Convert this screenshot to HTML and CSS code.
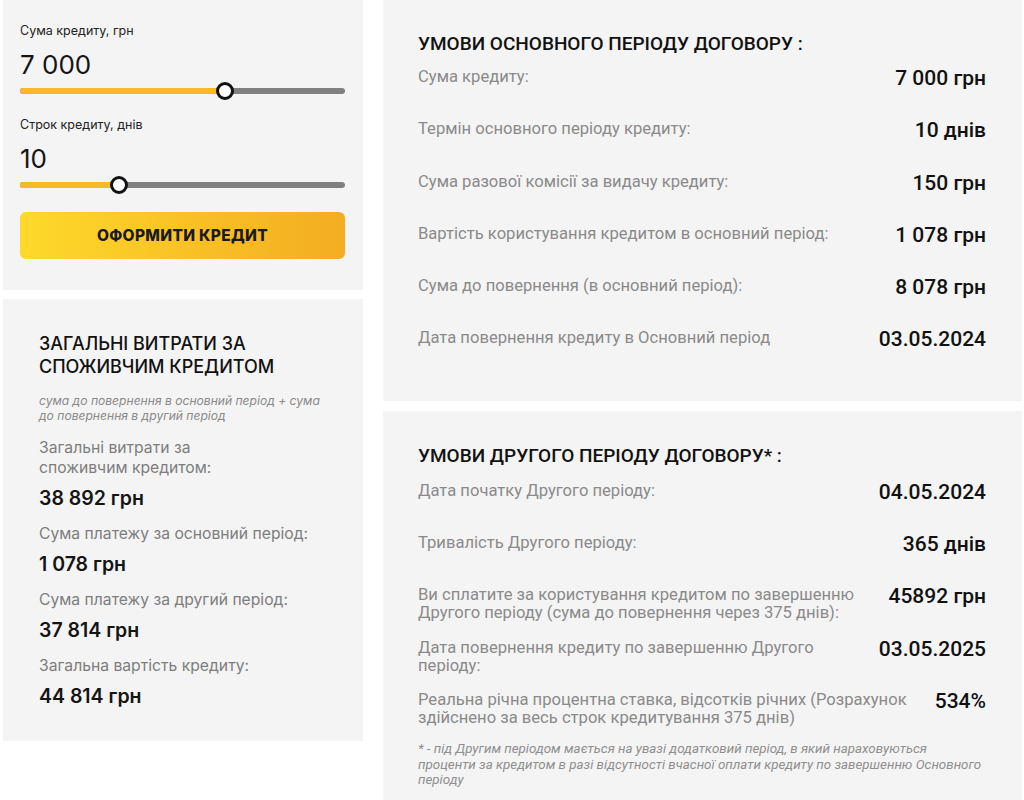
FILE: index.html
```html
<!DOCTYPE html>
<html lang="uk">
<head>
    <meta charset="UTF-8">
    <meta name="viewport" content="width=device-width, initial-scale=1.0">
    <title>Калькулятор кредиту</title>
    <link rel="stylesheet" href="styles.css">
</head>
<body>
    <div class="calc">
        <div class="calc-left">
            <div class="card card-form">
                <div class="field-label">Сума кредиту, грн</div>
                <div class="field-value">7 000</div>
                <div class="range">
                    <div class="range-fill" style="width: 63%"></div>
                    <div class="range-knob" style="left: 63%"></div>
                </div>

                <div class="field-label field-label-next">Строк кредиту, днів</div>
                <div class="field-value">10</div>
                <div class="range">
                    <div class="range-fill" style="width: 30.5%"></div>
                    <div class="range-knob" style="left: 30.5%"></div>
                </div>

                <button class="btn-apply">ОФОРМИТИ КРЕДИТ</button>
            </div>

            <div class="card card-total">
                <h2 class="total-title">ЗАГАЛЬНІ ВИТРАТИ ЗА СПОЖИВЧИМ КРЕДИТОМ</h2>
                <p class="total-note">сума до повернення в основний період + сума до повернення в другий період</p>
                <div class="total-label">Загальні витрати за<br>споживчим кредитом:</div>
                <div class="total-value">38 892 грн</div>
                <div class="total-label">Сума платежу за основний період:</div>
                <div class="total-value">1 078 грн</div>
                <div class="total-label">Сума платежу за другий період:</div>
                <div class="total-value">37 814 грн</div>
                <div class="total-label">Загальна вартість кредиту:</div>
                <div class="total-value">44 814 грн</div>
            </div>
        </div>

        <div class="calc-right">
            <div class="card card-terms card-terms-first">
                <h2 class="terms-title">УМОВИ ОСНОВНОГО ПЕРІОДУ ДОГОВОРУ :</h2>
                <div class="terms-row">
                    <span class="terms-label">Сума кредиту:</span>
                    <span class="terms-value">7 000 грн</span>
                </div>
                <div class="terms-row">
                    <span class="terms-label">Термін основного періоду кредиту:</span>
                    <span class="terms-value">10 днів</span>
                </div>
                <div class="terms-row">
                    <span class="terms-label">Сума разової комісії за видачу кредиту:</span>
                    <span class="terms-value">150 грн</span>
                </div>
                <div class="terms-row">
                    <span class="terms-label">Вартість користування кредитом в основний період:</span>
                    <span class="terms-value">1 078 грн</span>
                </div>
                <div class="terms-row">
                    <span class="terms-label">Сума до повернення (в основний період):</span>
                    <span class="terms-value">8 078 грн</span>
                </div>
                <div class="terms-row">
                    <span class="terms-label">Дата повернення кредиту в Основний період</span>
                    <span class="terms-value">03.05.2024</span>
                </div>
            </div>

            <div class="card card-terms card-terms-second">
                <h2 class="terms-title">УМОВИ ДРУГОГО ПЕРІОДУ ДОГОВОРУ* :</h2>
                <div class="terms-row">
                    <span class="terms-label">Дата початку Другого періоду:</span>
                    <span class="terms-value">04.05.2024</span>
                </div>
                <div class="terms-row">
                    <span class="terms-label">Тривалість Другого періоду:</span>
                    <span class="terms-value">365 днів</span>
                </div>
                <div class="terms-row">
                    <span class="terms-label">Ви сплатите за користування кредитом по завершенню Другого періоду (сума до повернення через 375 днів):</span>
                    <span class="terms-value">45892 грн</span>
                </div>
                <div class="terms-row">
                    <span class="terms-label">Дата повернення кредиту по завершенню Другого періоду:</span>
                    <span class="terms-value">03.05.2025</span>
                </div>
                <div class="terms-row">
                    <span class="terms-label">Реальна річна процентна ставка, відсотків річних (Розрахунок здійснено за весь строк кредитування 375 днів)</span>
                    <span class="terms-value">534%</span>
                </div>
                <p class="terms-note">* - під Другим періодом мається на увазі додатковий період, в який нараховуються<br>проценти за кредитом в разі відсутності вчасної оплати кредиту по завершенню Основного періоду</p>
            </div>
        </div>
    </div>
</body>
</html>
```

FILE: styles.css
```css
body {
    margin: 0;
    background: #fff;
    font-family: Inter, "Noto Sans", sans-serif;
    color: #151515;
}
.calc {
    display: flex;
    gap: 20px;
    padding: 0 2px 0 3px;
}
.calc-left {
    width: 360px;
    display: flex;
    flex-direction: column;
    gap: 9px;
}
.calc-right {
    flex: 1;
    display: flex;
    flex-direction: column;
    gap: 10px;
}
.card {
    background: #f4f4f4;
}

/* form with sliders */
.card-form {
    padding: 23px 18px 31px 17px;
}
.field-label {
    font-size: 12.5px;
    line-height: 16px;
    color: #222;
}
.field-label-next {
    margin-top: 18px;
}
.field-value {
    margin-top: 10px;
    font-size: 26px;
    line-height: 32px;
    color: #151515;
}
.range {
    position: relative;
    height: 16px;
    margin-top: 2px;
}
.range::before {
    content: "";
    position: absolute;
    left: 0;
    right: 0;
    top: 5px;
    height: 6px;
    border-radius: 3px;
    background: #808080;
}
.range-fill {
    position: absolute;
    left: 0;
    top: 5px;
    height: 6px;
    border-radius: 3px 0 0 3px;
    background: #f7b928;
}
.range-knob {
    position: absolute;
    top: -1px;
    width: 12px;
    height: 12px;
    margin-left: -9px;
    border: 3px solid #111;
    border-radius: 50%;
    background: #fff;
}
.btn-apply {
    display: block;
    width: 100%;
    height: 47px;
    margin-top: 19px;
    border: none;
    border-radius: 6px;
    background: linear-gradient(90deg, #fed92b 0%, #f8c025 55%, #f3ad22 100%);
    font-family: Inter, "Noto Sans", sans-serif;
    font-size: 15.5px;
    font-weight: 800;
    letter-spacing: 0.3px;
    color: #1a1a1a;
    cursor: pointer;
}

/* total costs */
.card-total {
    padding: 33px 30px 32px 36px;
}
.total-title {
    margin: 0;
    font-size: 18px;
    line-height: 23px;
    font-weight: 500;
    color: #111;
}
.total-note {
    margin: 15px 0 0;
    font-size: 12.1px;
    line-height: 15px;
    font-style: italic;
    color: #8a8a8a;
}
.total-label {
    margin-top: 13px;
    font-size: 15.7px;
    line-height: 20px;
    color: #7d7d7d;
}
.total-note + .total-label {
    margin-top: 15px;
}
.total-value {
    margin-top: 8px;
    font-size: 19.5px;
    line-height: 25px;
    font-weight: 600;
    color: #151515;
}

/* contract terms */
.card-terms {
    padding: 33px 36px 19px 35px;
    font-family: Roboto, "Liberation Sans", sans-serif;
}
.card-terms-second {
    padding-top: 34px;
}
.terms-title {
    margin: 0 0 13px;
    font-size: 19px;
    line-height: 22px;
    font-weight: 500;
    color: #111;
}
.card-terms-second .terms-title {
    margin-bottom: 15px;
}
.terms-row {
    display: flex;
    align-items: flex-start;
    gap: 24px;
    min-height: 52.3px;
}
.terms-label {
    flex: 1;
    font-size: 16.6px;
    line-height: 18px;
    color: #8a8a8a;
}
.terms-value {
    white-space: nowrap;
    font-size: 21px;
    line-height: 20px;
    font-weight: 500;
    color: #111;
}
.terms-note {
    margin: -2px 0 0;
    font-size: 13.35px;
    line-height: 15.5px;
    font-style: italic;
    color: #8f8f8f;
}
```
